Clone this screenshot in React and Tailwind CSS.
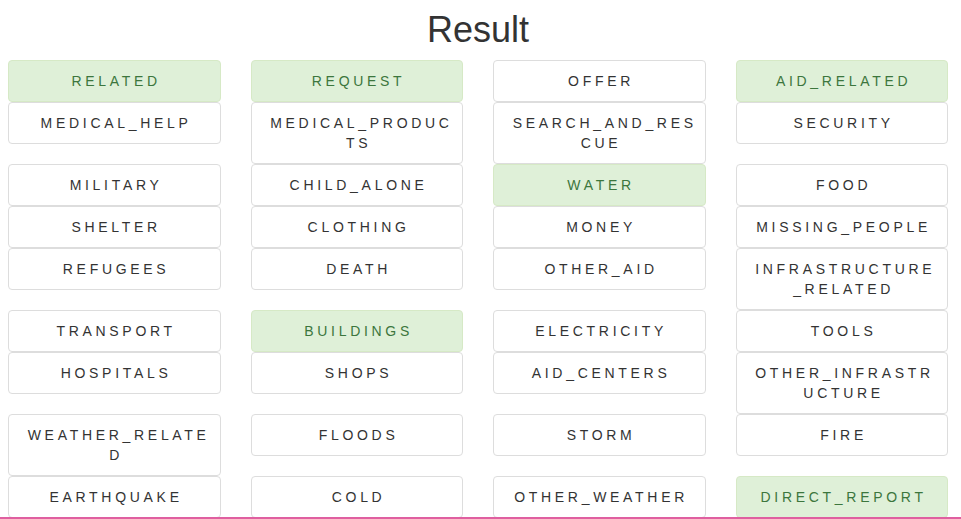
const rows = [
  [['RELATED', true], ['REQUEST', true], ['OFFER'], ['AID_RELATED', true]],
  [['MEDICAL_HELP'], ['MEDICAL_PRODUC\nTS'], ['SEARCH_AND_RES\nCUE'], ['SECURITY']],
  [['MILITARY'], ['CHILD_ALONE'], ['WATER', true], ['FOOD']],
  [['SHELTER'], ['CLOTHING'], ['MONEY'], ['MISSING_PEOPLE']],
  [['REFUGEES'], ['DEATH'], ['OTHER_AID'], ['INFRASTRUCTURE\n_RELATED']],
  [['TRANSPORT'], ['BUILDINGS', true], ['ELECTRICITY'], ['TOOLS']],
  [['HOSPITALS'], ['SHOPS'], ['AID_CENTERS'], ['OTHER_INFRASTR\nUCTURE']],
  [['WEATHER_RELATE\nD'], ['FLOODS'], ['STORM'], ['FIRE']],
  [['EARTHQUAKE'], ['COLD'], ['OTHER_WEATHER'], ['DIRECT_REPORT', true]],
];

function Item({ label, hit }) {
  return (
    <div
      className={
        'border rounded-[4px] py-[10px] pl-[18.7px] pr-[15px] text-center text-[14px] leading-[20px] tracking-[3.7px] whitespace-pre-line ' +
        (hit ? 'bg-[#dff0d8] border-[#d6e9c6] text-[#3c763d]' : 'bg-white border-[#ddd] text-[#333]')
      }
    >
      {label}
    </div>
  );
}

export default function App() {
  return (
    <div className="bg-white min-h-[519px] font-['Liberation_Sans',Arial,sans-serif] text-[#333]">
      <div className="pl-[8px] pr-[13px]">
        {/* titulo */}
        <h1 className="pt-[10px] pb-[10px] text-center text-[36px] leading-[40px] font-normal">Result</h1>

        {/* categorias */}
        <div className="grid grid-cols-4 gap-x-[30px] items-start">
          {rows.map((row) =>
            row.map(([label, hit]) => <Item key={label} label={label} hit={hit} />)
          )}
        </div>
      </div>
      <div className="relative h-[2px] -mt-[1px] bg-[#df5fa0]" />
    </div>
  );
}
